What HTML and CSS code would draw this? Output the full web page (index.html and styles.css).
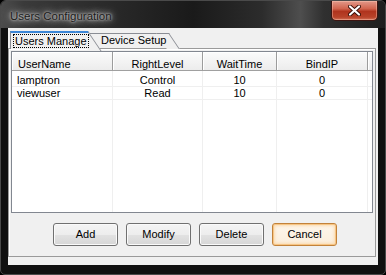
FILE: index.html
```html
<!DOCTYPE html>
<html lang="en">
<head>
    <meta charset="UTF-8">
    <title>Users Configuration</title>
    <link rel="stylesheet" href="styles.css">
</head>
<body>
    <div class="window">
        <div class="titlebar">
            <div class="title">Users Configuration</div>
            <div class="close-btn">
                <svg width="13" height="11" viewBox="0 0 13 11">
                    <path d="M2 1.5 L11 9.5 M11 1.5 L2 9.5" stroke="#3a1008" stroke-width="4" stroke-linecap="round"/>
                    <path d="M2 1.5 L11 9.5 M11 1.5 L2 9.5" stroke="#fff" stroke-width="2.2" stroke-linecap="round"/>
                </svg>
            </div>
        </div>

        <div class="client">
            <div class="tabs">
                <div class="tab active"><span class="focus">Users Manage</span></div>
                <div class="tab">Device Setup</div>
            </div>

            <div class="panel">
                <div class="listview">
                    <div class="hd first">UserName</div>
                    <div class="hd">RightLevel</div>
                    <div class="hd">WaitTime</div>
                    <div class="hd">BindIP</div>
                    <div class="hd rest"></div>

                    <div class="cell row1 first">lamptron</div>
                    <div class="cell row1">Control</div>
                    <div class="cell row1">10</div>
                    <div class="cell row1">0</div>
                    <div class="cell row1 rest"></div>

                    <div class="cell first">viewuser</div>
                    <div class="cell">Read</div>
                    <div class="cell">10</div>
                    <div class="cell">0</div>
                    <div class="cell rest"></div>

                    <div class="fill"></div>
                    <div class="fill"></div>
                    <div class="fill"></div>
                    <div class="fill"></div>
                    <div class="fill rest"></div>
                </div>

                <div class="buttons">
                    <div class="btn">Add</div>
                    <div class="btn">Modify</div>
                    <div class="btn">Delete</div>
                    <div class="btn default">Cancel</div>
                </div>
            </div>
        </div>
    </div>
</body>
</html>
```
FILE: styles.css
```css
* { margin: 0; padding: 0; box-sizing: border-box; }
body {
    background: #000;
    font-family: "Liberation Sans", Arial, sans-serif;
    font-size: 11px;
    color: #000;
}
.window {
    width: 386px;
    height: 275px;
    background: #101010;
    border: 1px solid #4a4a4a;
    border-radius: 6px 6px 5px 5px;
    display: flex;
    flex-direction: column;
    overflow: hidden;
}
.titlebar {
    height: 27px;
    display: flex;
    justify-content: space-between;
    align-items: flex-start;
    padding: 0 7px;
    background: linear-gradient(90deg, #4c4c4c 0, #3a3a3a 6%, #2c2c2c 25%, #1a1a1a 50%, #2c2c2c 68%, #4e4e4e 78%, #303030 84%, #1e1e1e 100%);
}
.title {
    padding: 8px 0 0 2px;
    font-size: 11.5px;
    line-height: 14px;
    color: #1a1a1a;
    text-shadow: 0 0 10px #c8c8c8, 0 0 6px #bcbcbc, 0 0 3px #b0b0b0, 0 0 2px #a8a8a8;
}
.close-btn {
    width: 47px;
    height: 20px;
    display: flex;
    align-items: center;
    justify-content: center;
    border: 1px solid #3c1410;
    border-top: none;
    border-radius: 0 0 5px 5px;
    background: linear-gradient(#e2998a 0, #d2654f 40%, #b0341e 55%, #b8432a 85%, #d47058 100%);
    box-shadow: inset 0 0 0 1px rgba(255, 210, 190, 0.4);
}
.client {
    flex: 1;
    margin: 0 7px 9px;
    background: #f0f0f0;
    display: flex;
    flex-direction: column;
}
.tabs {
    height: 20px;
    display: flex;
    align-items: flex-end;
    padding-left: 2px;
}
.tab {
    position: relative;
    height: 15px;
    padding: 0 0 0 14px;
    line-height: 13px;
    border-top: 1px solid #8a8d94;
    background: #f0f0f0;
    width: 81px;
    z-index: 1;
}
.tab::after {
    content: '';
    position: absolute;
    top: -1px;
    left: calc(100% - 12px);
    width: 12px;
    height: 15px;
    border-top: 1px solid #8a8d94;
    border-right: 1px solid #8a8d94;
    background: #f0f0f0;
    transform: skewX(34deg);
    transform-origin: top left;
    z-index: -1;
}
.tab.active {
    height: 18px;
    width: 77px;
    padding: 1px 0 0 2px;
    margin-bottom: -1px;
    border-top: 2px solid #3c86d6;
    border-left: 1px solid #8a8d94;
    z-index: 2;
}
.tab.active::after {
    top: -2px;
    height: 18px;
    border-top: 2px solid #3c86d6;
}
.focus {
    display: inline-block;
    height: 14px;
    padding: 0 1px;
    line-height: 12px;
    border: 1px dotted #000;
    white-space: nowrap;
}
.panel {
    height: 209px;
    margin: 0 2px 8px 0;
    padding: 2px;
    border: 1px solid #9a9a9a;
    box-shadow: inset 1px 1px #fff;
    display: flex;
    flex-direction: column;
}
.listview {
    height: 162px;
    border: 1px solid #828790;
    background: #fff;
    display: grid;
    grid-template-columns: 101px 90px 74px 91px 1fr;
    grid-template-rows: 19px 16px 13px 1fr;
}
.hd {
    padding-top: 6px;
    line-height: 12px;
    text-align: center;
    background: linear-gradient(#fbfbfb, #ececec);
    border-bottom: 1px solid #a0a0a0;
    border-right: 1px solid #9c9c9c;
    box-shadow: inset 1px 1px #fff;
    white-space: nowrap;
}
.hd.first { text-align: left; padding-left: 6px; }
.hd.rest { border-right: none; }
.cell {
    line-height: 12px;
    text-align: center;
    border-bottom: 1px solid #efefef;
    border-right: 1px solid #efefef;
}
.cell.row1 { padding-top: 3px; }
.cell.first { text-align: left; padding-left: 5px; }
.fill { border-right: 1px solid #efefef; }
.cell.rest, .fill.rest { border-right: none; }
.buttons {
    display: flex;
    gap: 8px;
    margin-top: 10px;
    padding-left: 42px;
}
.btn {
    width: 65px;
    height: 23px;
    line-height: 21px;
    text-align: center;
    border: 1px solid #707070;
    border-radius: 3px;
    background: linear-gradient(#f4f4f4 0, #ededed 50%, #e2e2e2 51%, #d6d6d6 100%);
    box-shadow: inset 0 0 0 1px #fafafa;
}
.btn.default {
    border-color: #c2823a;
    background: linear-gradient(#fdf6ec, #fbeedc);
    box-shadow: inset 0 0 0 1px #f7c585, inset 0 0 3px 2px #fbdcb2;
}
```
